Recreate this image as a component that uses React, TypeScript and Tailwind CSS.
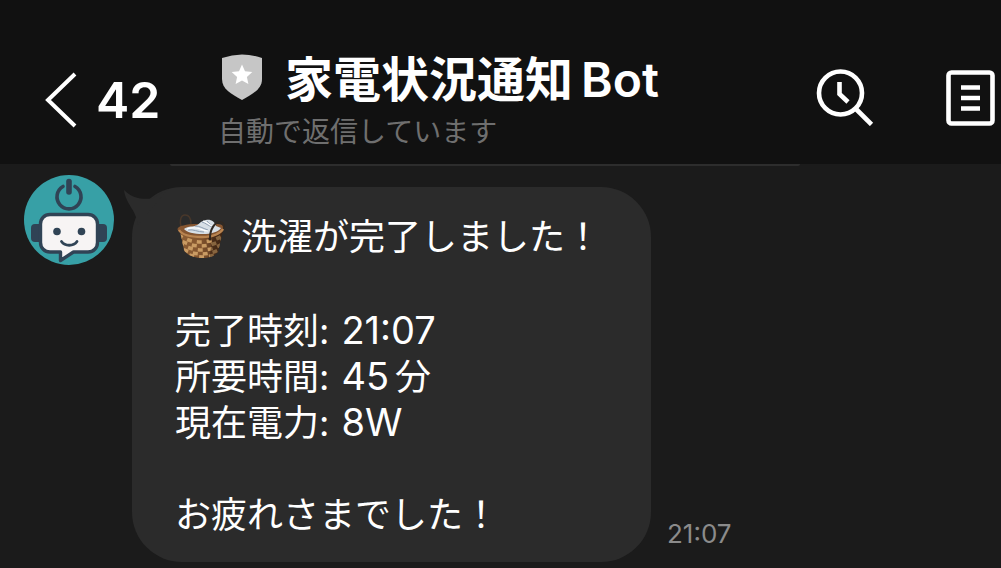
const details = [
  { label: '完了時刻', value: '21:07', unit: '' },
  { label: '所要時間', value: '45', unit: '分' },
  { label: '現在電力', value: '8W', unit: '' },
]

function BotAvatar() {
  return (
    <svg viewBox="0 0 90 90" className="w-[90px] h-[90px] shrink-0" role="img" aria-label="Bot">
      <circle cx="45" cy="45" r="45" fill="#37a0a6" />
      <g fill="none" stroke="#304355" strokeLinecap="round" strokeLinejoin="round">
        <path d="M39 11.5a12 12 0 1 0 12 0" strokeWidth="3.6" />
        <path d="M45 6.500v10.500" strokeWidth="5.600" />
      </g>
      <rect x="7" y="49" width="14" height="18" rx="4" fill="#304355" />
      <rect x="69" y="49" width="14" height="18" rx="4" fill="#304355" />
      <path
        d="M26 39.5h38c5.500 0 9.500 4 9.500 9.500v18.500c0 5.500-4 9.500-9.500 9.500H49.500L36.500 85.500V77H26c-5.500 0-9.500-4-9.500-9.500V49c0-5.500 4-9.500 9.500-9.500z"
        fill="#f7f4f4"
        stroke="#304355"
        strokeWidth="3.4"
        strokeLinejoin="round"
      />
      <circle cx="33" cy="56.500" r="3.800" fill="#304355" />
      <circle cx="57.500" cy="56.500" r="3.800" fill="#304355" />
      <path d="M37.500 66.500c3.500 5 12 5 15.500 0" fill="none" stroke="#304355" strokeWidth="2.800" strokeLinecap="round" />
    </svg>
  )
}

function Basket() {
  return (
    <svg viewBox="-2 0 50 48" className="w-[50px] h-[48px] shrink-0" role="img" aria-label="洗濯かご">
      <defs>
        <linearGradient id="wicker" x1="0" x2="1">
          <stop offset="0" stopColor="#8d5f36" />
          <stop offset="0.45" stopColor="#84552e" />
          <stop offset="1" stopColor="#432817" />
        </linearGradient>
        <clipPath id="body">
          <path d="M3 18l4 19c2 4 8 8 18 8s13-3 16-6l5-22z" />
        </clipPath>
      </defs>
      <path d="M4.500 15C2 7 4 2 8 2c4 0 6 4 6 9" fill="none" stroke="#48372a" strokeWidth="1.500" />
      <g clipPath="url(#body)">
        <rect y="14" width="50" height="33" fill="url(#wicker)" />
        <g fill="none" stroke="#c99b63" strokeWidth="3.600" strokeDasharray="5 5">
          <path d="M1 22q23 14 46 0" />
          <path d="M1 26q23 14 46 0" strokeDashoffset="5" />
          <path d="M2 30q23 14 45 0" />
          <path d="M2 34q23 14 45 0" strokeDashoffset="5" />
          <path d="M3 38q23 12 44 0" />
        </g>
        <path d="M36 20l12-4-4 28-12 4z" fill="#26150a" opacity="0.4" />
      </g>
      <path d="M.5 16c0-3 9-5 20-5h18c6 0 8 1 8 4 0 5-11 9-22 9S.5 20 .5 16z" fill="#855530" />
      <path d="M2 17c3 5 12 7 23 7 12 0 19-4 21-8" fill="none" stroke="#b98450" strokeWidth="2.400" />
      <path d="M7 16c4-3 7-2 11-3 4-1 5-5 11-6 5-1 9 2 10 6l5 2c-3 4-10 6-18 6-9 0-17-2-19-5z" fill="#d7dfe6" />
      <path d="M18 13c5 0 7 2 13 4M25 9c4 1 6 4 11 5M11 17c6-1 9 2 16 2M30 8c2 3 4 3 6 6" fill="none" stroke="#8f9fb2" strokeWidth="1" />
      <path d="M10 16c5-2 5-1 9-1s7 3 12 3M26 8c4 1 5 3 9 5" fill="none" stroke="#fff" strokeWidth="1.200" />
      <path d="M33 25c0-9 5-16 10-16 3 0 4 3 4 7" fill="none" stroke="#302923" strokeWidth="2" />
      <circle cx="33" cy="26" r="1.600" fill="#352317" />
    </svg>
  )
}

export default function App() {
  return (
    <div className="min-h-screen flex flex-col overflow-hidden bg-[#1b1b1b] text-white font-['Inter','Noto_Sans_CJK_JP',sans-serif]">
      <header className="flex items-start bg-[#111111] pt-12 pb-3 pl-11 pr-1.5">
        <button type="button" aria-label="戻る" className="mt-6 shrink-0">
          <svg viewBox="0 0 34 56" className="w-[34px] h-14" fill="none" stroke="currentColor" strokeWidth="4">
            <path d="M31 2 4 28l27 26" />
          </svg>
        </button>
        <span className="mt-6 ml-[18px] w-[122px] shrink-0 text-[50px] leading-14 font-semibold">42</span>

        <div className="flex-1 min-w-0">
          <div className="flex items-start gap-[23px]">
            <svg viewBox="0 0 40 46" className="w-10 h-[46px] ml-1 mt-1.5 shrink-0" aria-hidden="true">
              <path d="M0 4Q20-3 40 4v21c0 10-9 15-20 21C9 40 0 35 0 25z" fill="#c6c6c6" />
              <path d="m20 10.500 3 6.700 7.300.8-5.400 4.900 1.500 7.200L20 26.500l-6.400 3.600 1.500-7.200L9.700 18l7.300-.8z" fill="#fff" />
            </svg>
            <h1 className="flex gap-2 text-[48px] leading-16 font-semibold whitespace-nowrap">
              <span>家電状況通知</span>
              <span>Bot</span>
            </h1>
          </div>
          <p className="text-[28px] leading-10 text-[#6f6f6f] whitespace-nowrap">自動で返信しています</p>
        </div>

        <div className="flex items-end gap-[72px] mt-5 shrink-0">
          <button type="button" aria-label="検索">
            <svg viewBox="0 0 58 58" className="w-[58px] h-[58px]" fill="none" stroke="currentColor" strokeWidth="4.600">
              <circle cx="24.500" cy="25" r="21.500" />
              <path d="m39.500 40.500 16 16" />
              <path d="M23.500 14v12l8.500 8" />
            </svg>
          </button>
          <button type="button" aria-label="メニュー">
            <svg viewBox="0 0 49 56" className="w-[49px] h-14" fill="none" stroke="currentColor" strokeWidth="4.600">
              <rect x="2.500" y="2.500" width="44" height="51" rx="3" />
              <path d="M15 17.500h19M15 28h19M15 38.500h19" />
            </svg>
          </button>
        </div>
      </header>

      <main className="flex-1">
        <div className="ml-[170px] w-[630px] h-0.5 rounded-b-full bg-[#2d2d2d]" />
        <div className="flex items-start pl-6 pt-[9px]">
          <BotAvatar />
          <div className="relative ml-[18px] mt-3 w-[519px] rounded-[50px] bg-[#2b2b2b] pl-[43px] pt-[27px] pb-6 text-[36px] leading-[46px]">
            <svg viewBox="0 0 50 40" className="absolute -left-2 top-0 w-[50px] h-10" aria-hidden="true">
              <path d="M0 3c9 9 20 10 29 8l15-9-30 36C12 22 2 18 0 3z" fill="#2b2b2b" />
            </svg>
            <p className="flex items-center gap-4 h-[46px] whitespace-nowrap">
              <Basket />
              洗濯が完了しました！
            </p>
            <ul className="my-[47px]">
              {details.map(({ label, value, unit }) => (
                <li key={label} className="flex items-baseline h-[46px]">
                  <span className="mr-3">{label}:</span>
                  <span className="mr-1.5 text-[38px]">{value}</span>
                  {unit}
                </li>
              ))}
            </ul>
            <p>お疲れさまでした！</p>
          </div>
          <time className="self-end ml-4 mb-3 text-[26px] leading-8 text-[#8b8b8b]">21:07</time>
        </div>
      </main>
    </div>
  )
}
